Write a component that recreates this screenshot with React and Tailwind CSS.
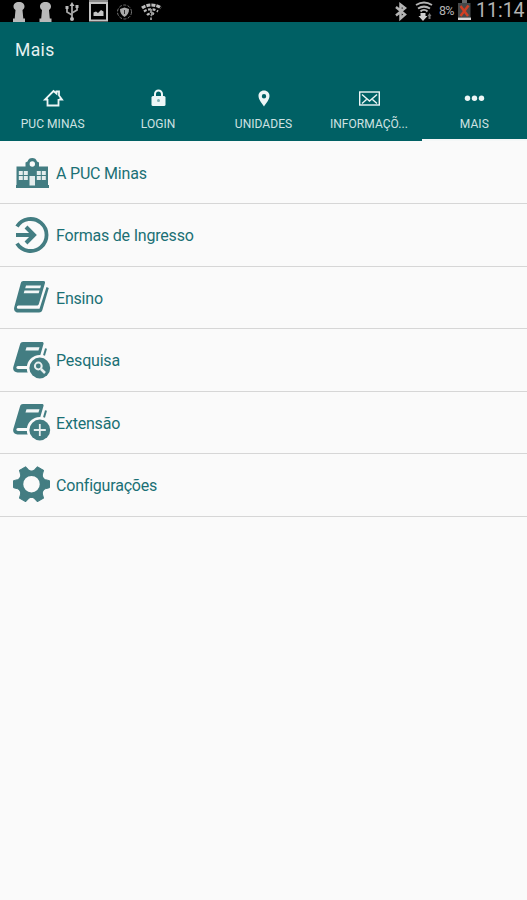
import clsx from 'clsx'

function StatusBar() {
  return (
    <div className="flex h-[22px] items-center justify-between overflow-hidden bg-black">
      <svg width="170" height="22" viewBox="0 0 170 22" fill="none" aria-hidden="true">
        {/* pawns */}
        <path fill="#b9b9b9" d="M19 2c3.500 0 5.500 2 5.500 4.500 0 1.500-.7 2.700-2 3.500l.8 8.500h1.700V22H13v-3.500h1.700l.8-8.500c-1.300-.8-2-2-2-3.500C13.500 4 15.500 2 19 2Z" />
        <path fill="#b9b9b9" d="M45.500 2c3.500 0 5.500 2 5.500 4.500 0 1.500-.7 2.700-2 3.500l.8 8.500h1.700V22h-12v-3.500h1.700L42 10c-1.300-.8-2-2-2-3.500C40 4 42 2 45.500 2Z" />
        {/* usb */}
        <path stroke="#a8a8a8" strokeWidth="1.800" d="M72 4v14M72 15l-5-3V8M72 13l5-3V7" />
        <path fill="#b9b9b9" d="m72 2 2.500 4h-5ZM75.500 5h3v3h-3ZM65.500 6h3v3h-3Z" />
        <circle cx="72" cy="19" r="2" fill="#b9b9b9" />
        {/* gallery */}
        <path fill="#8b8b8b" d="M89 0h19v3H89Z" />
        <rect x="90" y="3" width="17" height="17.500" stroke="#c4c4c4" strokeWidth="2" />
        <path fill="#c4c4c4" d="M93.500 16v-3.500l2.500-1 2 1.500 3-3 2.500 1.500V16Z" />
        {/* shield */}
        <circle cx="124.500" cy="12" r="7" stroke="#777" strokeDasharray="3 1.500" />
        <path fill="#aaa" d="M124.500 7.500 129 9c0 4-1.500 6-4.500 8-3-2-4.500-4-4.500-8Z" />
        <path stroke="#333" d="M124.500 10v4" />
        {/* wifi with question mark */}
        <path stroke="#bcbcbc" strokeWidth="3" strokeDasharray="4 1" d="M142 8c5-4 14-4 19 0" />
        <path stroke="#bcbcbc" strokeWidth="2.200" strokeDasharray="3 1.500" d="M144 11.500c4-3 10-3 14 0M147 15c2-2 5-2 8-.5" />
        <path stroke="#999" strokeWidth="1.800" d="M151 9v4M153 12l-2 4M151 17.500v2.500" />
      </svg>
      <div className="flex h-full items-center text-[#b4b4b4]">
        <svg width="49" height="22" viewBox="0 0 49 22" fill="none" aria-hidden="true">
          {/* bluetooth */}
          <path stroke="#b4b4b4" strokeWidth="2.500" d="m6 7 9 7.500-4.500 4V4.500l4.500 3.500-9 7.500" />
          {/* wifi */}
          <path stroke="#b4b4b4" strokeWidth="2" d="M26 5c5-3 11-3 16 0M28 8.500c4-2.500 8-2.500 12 0M30.500 11.500c2-2 5-2 7 0" />
          <path fill="#d0d0d0" d="M30.500 13h5v3h2l-4.500 5-4.500-5h2Z" />
          <path fill="#777" d="m39.500 13 2 3h-1v3h-2v-3h-1Z" />
        </svg>
        <span className="w-[18px] text-[12.500px] leading-none tracking-[-0.8px]">8%</span>
        <svg width="16" height="22" viewBox="0 0 16 22" fill="none" aria-hidden="true">
          <path fill="#66696a" d="M5 0h5v3H5Z" />
          <rect x="1" y="3" width="12.500" height="14.500" fill="#45494a" />
          <path fill="#d5d5d5" d="M1 17.500h13V20H1Z" />
          <path stroke="#cf3f24" strokeWidth="2.500" d="m3.500 6 7.500 10M11.500 5.500l-8 10.500" />
        </svg>
        <span className="w-[54px] pl-[3px] text-[19.500px] leading-none tracking-[0px]">11:14</span>
      </div>
    </div>
  )
}

const tabs = [
  {
    label: 'PUC MINAS',
    icon: (
      <path
        fill="none"
        stroke="currentColor"
        strokeWidth="1.800"
        d="M6 12.500H3L11.500 4l3 2.500V4.500h2.500v4l3 4h-3M5.500 12v6.500h11V12"
      />
    ),
  },
  {
    label: 'LOGIN',
    icon: (
      <>
        <path fill="none" stroke="currentColor" strokeWidth="2" d="M8 10V7a3.500 3.500 0 0 1 7 0v3" />
        <rect x="4.500" y="9" width="14" height="10" rx="1.500" fill="currentColor" />
        <circle cx="11.500" cy="13.500" r="1.500" fill="#7faeb1" />
      </>
    ),
  },
  {
    label: 'UNIDADES',
    icon: (
      <path
        fill="currentColor"
        fillRule="evenodd"
        d="M11 3.500c3.300 0 5.500 2.400 5.500 5.500 0 3.500-3.500 7.500-5.500 10.500C9 16.500 5.500 12.500 5.500 9c0-3.100 2.200-5.500 5.500-5.500Zm0 3.500a2.200 2.200 0 1 0 0 4.400A2.200 2.200 0 0 0 11 7Z"
      />
    ),
  },
  {
    label: 'INFORMAÇÕ...',
    icon: (
      <g fill="none" stroke="currentColor" strokeWidth="1.400">
        <rect x="1.700" y="5" width="19.600" height="13" />
        <path d="m4 7.500 7.500 6.500 7.500-6.500M4 16.500l4.500-4M19 16.500l-4.500-4" />
      </g>
    ),
  },
  {
    label: 'MAIS',
    active: true,
    icon: (
      <g fill="currentColor">
        <circle cx="4.500" cy="11.200" r="2.700" />
        <circle cx="11.500" cy="11.200" r="2.700" />
        <circle cx="18.500" cy="11.200" r="2.700" />
      </g>
    ),
  },
]

function Tab({ label, icon, active }) {
  return (
    <div
      className={clsx(
        'flex flex-1 flex-col items-center border-b-2 pt-2',
        active ? 'border-[#f4f7f7]' : 'border-transparent'
      )}
    >
      <svg width="22" height="22" viewBox="0 0 22 22" className="text-[#edf6f6]" aria-hidden="true">
        {icon}
      </svg>
      <span className="mt-2 whitespace-nowrap text-[12px] leading-[14px] tracking-[0.05px] text-[#cfe2e2]">
        {label}
      </span>
    </div>
  )
}

// Book with its lower right corner cut away for a round badge
function BadgeBook({ children }) {
  return (
    <>
      <path
        fill="currentColor"
        d="M10 1h19c1.300 0 1.800.9 1.500 2l-5.800 20c-.4 1.500-1 2-2.500 2H5c-2 0-2.300 3 0 3h17v3.500H4.500C1.500 31.500-.5 29 .3 26L7 3.500C7.500 1.700 8.500 1 10 1Z"
      />
      <path fill="#f3f7f7" d="M13.500 6.300h13l-1 3.200h-13Z" />
      <path fill="none" stroke="currentColor" strokeWidth="2" d="m33 7.500-2 7" />
      <circle cx="26.800" cy="27" r="13" fill="#fafafa" />
      <circle cx="26.800" cy="27" r="10.400" fill="currentColor" />
      {children}
    </>
  )
}

const items = [
  {
    label: 'A PUC Minas',
    icon: (
      <>
        <path
          fill="currentColor"
          d="M3.500 13.500h9V9.500l2-1a5 5 0 0 1 9.500 0l2 1v4h9v18.500h1v3H3v-3h.5Z"
        />
        <circle cx="19.300" cy="11" r="2.700" fill="#fafafa" />
        <path
          fill="#e4eded"
          d="M5.800 18h4v4h-4ZM10.800 18h4v4h-4ZM5.800 23h4v4h-4ZM10.800 23h4v4h-4ZM23.800 18h4v4h-4ZM28.800 18h4v4h-4ZM23.800 23h4v4h-4ZM28.800 23h4v4h-4ZM16.500 23h5.500v9.500h-5.500Z"
        />
      </>
    ),
  },
  {
    label: 'Formas de Ingresso',
    icon: (
      <g fill="none" stroke="currentColor">
        <path strokeWidth="3.800" d="M4 10.500a16 16 0 1 1 0 17" />
        <path strokeWidth="4" d="M3 19h17M13 11l8 8-8 8" />
      </g>
    ),
  },
  {
    label: 'Ensino',
    icon: (
      <>
        <path
          fill="currentColor"
          d="M10.500 3h20c1.300 0 1.800.9 1.500 2l-6 20.500c-.4 1.500-1 2-2.500 2H5.500c-2 0-2.300 3.300 0 3.300h21L33.500 9l2.300 1-6.300 21.500c-.6 2.200-1.500 3-3.500 3H5c-3 0-4.500-2.500-3.700-5.500L7.700 5.500C8.200 3.700 9 3 10.500 3Z"
        />
        <path fill="#f3f7f7" d="M13 7.500h15l-.8 2.800H12.200ZM11.500 12.500h15l-.8 2.800H10.700Z" />
      </>
    ),
  },
  {
    label: 'Pesquisa',
    icon: (
      <BadgeBook>
        <g fill="none" stroke="#e8f0f0" strokeWidth="2">
          <circle cx="25.300" cy="25" r="3.400" />
          <path strokeWidth="2.500" d="m28 28 4 4" />
        </g>
      </BadgeBook>
    ),
  },
  {
    label: 'Extensão',
    icon: (
      <BadgeBook>
        <path fill="none" stroke="#e8f0f0" strokeWidth="1.800" d="M26.800 21v12M20.800 27h12" />
      </BadgeBook>
    ),
  },
  {
    label: 'Configurações',
    icon: (
      <g transform="translate(18.500 18.200)">
        {[0, 60, 120, 180, 240, 300].map((angle) => (
          <path
            key={angle}
            fill="currentColor"
            stroke="currentColor"
            strokeLinejoin="round"
            d="M10-6.500 14-4.500 18-3.500v7l-4 1-4 2Z"
            transform={`rotate(${angle})`}
          />
        ))}
        <circle r="11" fill="none" stroke="currentColor" strokeWidth="5.500" />
      </g>
    ),
  },
]

function MenuItem({ label, icon }) {
  return (
    <li className="flex h-[62.500px] items-center gap-[5px] border-b border-[#d6d6d6] pl-[13px]">
      <svg width="38" height="38" viewBox="0 0 38 38" className="shrink-0 text-[#437d82]" aria-hidden="true">
        {icon}
      </svg>
      <span className="pt-[3px] text-[16px] leading-5 tracking-[-0.2px] text-[#1b7075]">{label}</span>
    </li>
  )
}

export default function App() {
  return (
    <div className="flex h-[900px] w-[527px] flex-col bg-[#fafafa] font-[Roboto,sans-serif]">
      <StatusBar />
      <header className="flex h-[119px] flex-col bg-[#006064]">
        <h1 className="flex h-[57px] items-center pl-[15px] text-[17.500px] tracking-[0.4px] text-[#e6f1f1]">Mais</h1>
        <nav className="flex flex-1">
          {tabs.map((tab) => (
            <Tab key={tab.label} {...tab} />
          ))}
        </nav>
      </header>
      <ul className="pt-[0.600px]">
        {items.map((item) => (
          <MenuItem key={item.label} {...item} />
        ))}
      </ul>
    </div>
  )
}
